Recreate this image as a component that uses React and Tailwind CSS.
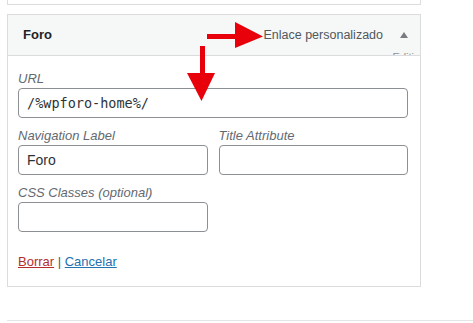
export default function App() {
  const font = { fontFamily: '"Liberation Sans", Arial, sans-serif' };
  return (
    <div className="relative w-[473px] h-[323px] bg-white overflow-hidden" style={font}>
      <div className="ml-[7px] w-[414px] h-[5px] border-x border-b border-[#dcdcde]" />
      <div className="ml-[7px] mt-[9px] w-[414px] border border-[#dcdcde]">
        <div className="relative h-[41px] bg-[#f6f7f7] border-b border-[#dcdcde] flex items-center pl-[15px] pr-[12px]">
          <span className="text-[13px] font-bold text-[#1d2327]">Foro</span>
          <span className="ml-auto text-[12.5px] text-[#50575e]">Enlace personalizado</span>
          <span className="ml-[17px] w-0 h-0 border-x-[4px] border-x-transparent border-b-[6px] border-b-[#787c82]" />
          <div className="absolute right-[6px] bottom-0 h-[4px] overflow-hidden">
            <span className="block text-[11px] leading-[13px] text-[#8c8f94]">Editi</span>
          </div>
        </div>
        <div className="bg-white pl-[10px] pr-[12px] pt-[14px] pb-[15px]">
          <div className="text-[13px] italic leading-[18px] text-[#646970]">URL</div>
          <div className="h-[30px] w-full rounded-[4px] border border-[#8c8f94] flex items-center pl-[8px] text-[13.5px] text-[#2c3338]" style={{ fontFamily: '"DejaVu Sans Mono", "Liberation Mono", monospace' }}>
            /%wpforo-home%/
          </div>
          <div className="mt-[9px] flex gap-[11px]">
            <div className="w-[190px]">
              <div className="text-[13px] italic leading-[18px] text-[#646970]">Navigation Label</div>
              <div className="h-[30px] rounded-[4px] border border-[#8c8f94] flex items-center pl-[8px] text-[14px] text-[#2c3338]">Foro</div>
            </div>
            <div className="w-[190px]">
              <div className="text-[13px] italic leading-[18px] text-[#646970]">Title Attribute</div>
              <div className="h-[30px] rounded-[4px] border border-[#8c8f94]" />
            </div>
          </div>
          <div className="mt-[9px] w-[190px]">
            <div className="text-[13px] italic leading-[18px] text-[#646970]">CSS Classes (optional)</div>
            <div className="h-[30px] rounded-[4px] border border-[#8c8f94]" />
          </div>
          <div className="mt-[21px] text-[13px] leading-[18px] text-[#50575e]">
            <a className="text-[#b32d2e] underline">Borrar</a> | <a className="text-[#2271b1] underline">Cancelar</a>
          </div>
        </div>
      </div>
      <div className="ml-[7px] mt-[33px] border-t border-[#e5e5e5]" />
      <svg className="absolute left-0 top-0" width="473" height="323" viewBox="0 0 473 323">
        <rect x="207" y="34" width="30" height="5" fill="#e8000b" />
        <polygon points="235,22 263,36.5 235,48" fill="#e8000b" />
        <rect x="200" y="46" width="5" height="29" fill="#e8000b" />
        <polygon points="187,73 215,73 201.5,101" fill="#e8000b" />
      </svg>
    </div>
  );
}
